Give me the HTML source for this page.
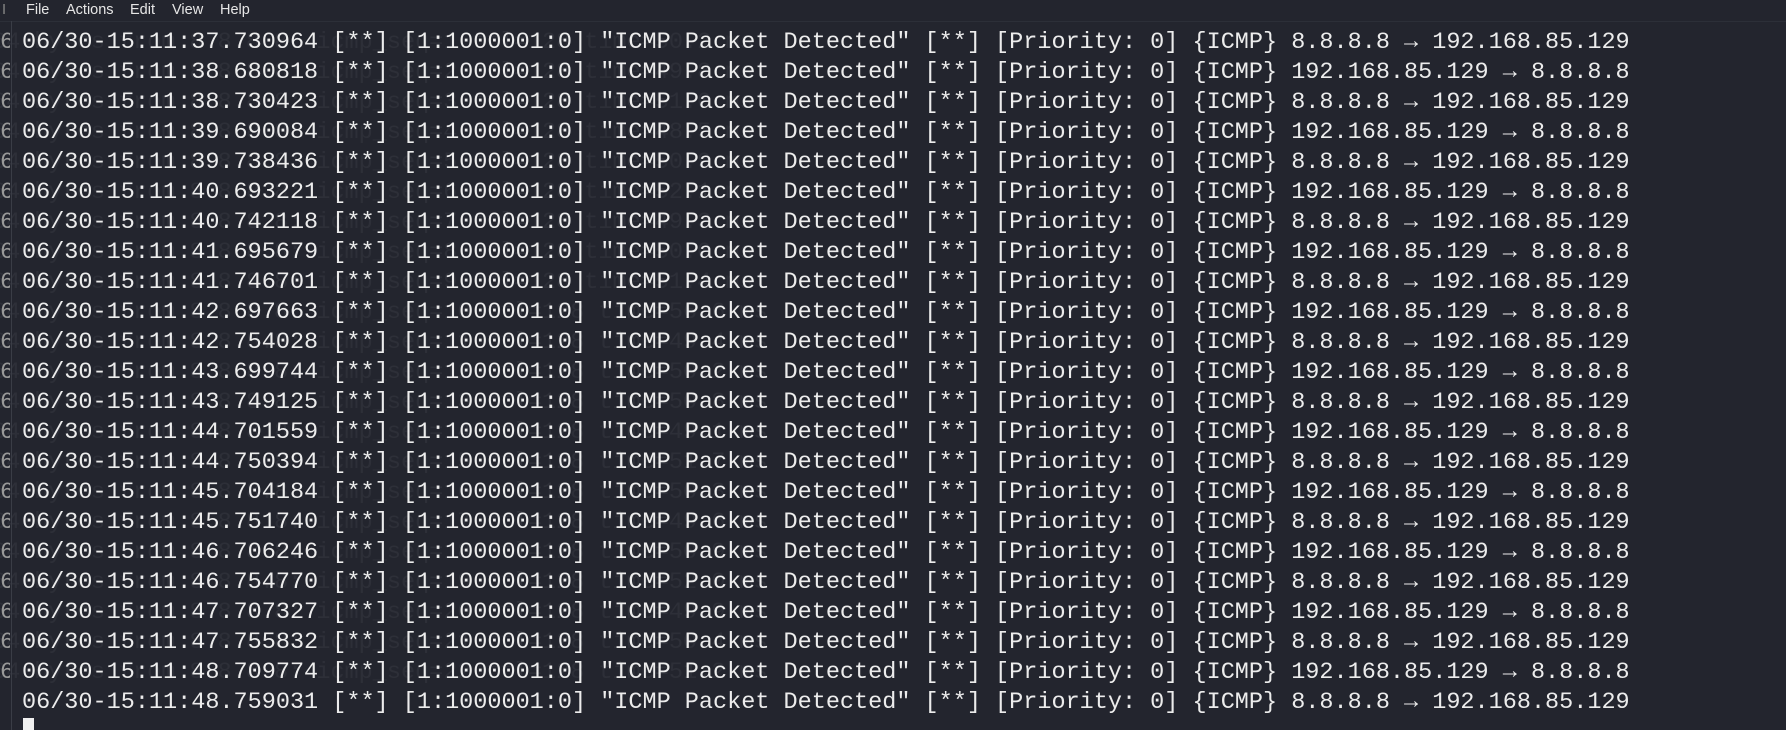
<!DOCTYPE html>
<html><head><style>
html,body{margin:0;padding:0;width:1786px;height:730px;overflow:hidden;background:#23252e;}
.menu{position:absolute;left:0;top:0;width:1786px;height:21px;background:#23252e;border-bottom:1px solid #2c2f38;font-family:"Liberation Sans",sans-serif;font-size:14.5px;color:#e6e6e6;}
.menu span{position:absolute;top:2px;}
.vline{position:absolute;left:11px;top:21px;width:1px;height:709px;background:#3a3d46;}
.ghost{position:absolute;left:-8px;top:28px;font-family:"Liberation Mono",monospace;font-size:23.5px;line-height:30px;color:#e8e8e8;opacity:0.05;white-space:pre;}
.log{position:absolute;left:22px;top:28px;font-family:"Liberation Mono",monospace;font-size:23.5px;line-height:30px;color:#ececec;white-space:pre;}
.left{position:absolute;left:0;top:28px;font-family:"Liberation Mono",monospace;font-size:23.5px;line-height:30px;color:#999;white-space:pre;width:10px;overflow:hidden;}
.cur{position:absolute;left:23px;top:718px;width:11px;height:12px;background:#f0f0f0;}
</style></head><body>
<div class="menu"><span style="left:2px;color:#888">I</span><span style="left:26px">File</span><span style="left:66px">Actions</span><span style="left:130px">Edit</span><span style="left:172px">View</span><span style="left:220px">Help</span></div>
<div class="ghost">64 bytes from 8.8.8.8: icmp_seq=1 ttl=128 time=50.2 ms
64 bytes from 8.8.8.8: icmp_seq=2 ttl=128 time=49.8 ms
64 bytes from 8.8.8.8: icmp_seq=3 ttl=128 time=51.0 ms
64 bytes from 8.8.8.8: icmp_seq=4 ttl=128 time=48.5 ms
64 bytes from 8.8.8.8: icmp_seq=5 ttl=128 time=50.9 ms
64 bytes from 8.8.8.8: icmp_seq=6 ttl=128 time=52.1 ms
64 bytes from 8.8.8.8: icmp_seq=7 ttl=128 time=49.3 ms
64 bytes from 8.8.8.8: icmp_seq=8 ttl=128 time=50.0 ms
64 bytes from 8.8.8.8: icmp_seq=9 ttl=128 time=51.4 ms
64 bytes from 8.8.8.8: icmp_seq=10 ttl=128 time=56.6 ms
64 bytes from 8.8.8.8: icmp_seq=11 ttl=128 time=49.4 ms
64 bytes from 8.8.8.8: icmp_seq=12 ttl=128 time=50.2 ms
64 bytes from 8.8.8.8: icmp_seq=13 ttl=128 time=50.8 ms
64 bytes from 8.8.8.8: icmp_seq=14 ttl=128 time=49.1 ms
64 bytes from 8.8.8.8: icmp_seq=15 ttl=128 time=51.7 ms
64 bytes from 8.8.8.8: icmp_seq=16 ttl=128 time=50.3 ms
64 bytes from 8.8.8.8: icmp_seq=17 ttl=128 time=49.6 ms
64 bytes from 8.8.8.8: icmp_seq=18 ttl=128 time=50.9 ms
64 bytes from 8.8.8.8: icmp_seq=19 ttl=128 time=52.0 ms
64 bytes from 8.8.8.8: icmp_seq=20 ttl=128 time=49.9 ms
64 bytes from 8.8.8.8: icmp_seq=21 ttl=128 time=50.4 ms
64 bytes from 8.8.8.8: icmp_seq=22 ttl=128 time=51.2 ms</div>
<div class="left">6
6
6
6
6
6
6
6
6
6
6
6
6
6
6
6
6
6
6
6
6
6</div>
<div class="vline"></div>
<div class="log">06/30-15:11:37.730964 [**] [1:1000001:0] "ICMP Packet Detected" [**] [Priority: 0] {ICMP} 8.8.8.8 → 192.168.85.129
06/30-15:11:38.680818 [**] [1:1000001:0] "ICMP Packet Detected" [**] [Priority: 0] {ICMP} 192.168.85.129 → 8.8.8.8
06/30-15:11:38.730423 [**] [1:1000001:0] "ICMP Packet Detected" [**] [Priority: 0] {ICMP} 8.8.8.8 → 192.168.85.129
06/30-15:11:39.690084 [**] [1:1000001:0] "ICMP Packet Detected" [**] [Priority: 0] {ICMP} 192.168.85.129 → 8.8.8.8
06/30-15:11:39.738436 [**] [1:1000001:0] "ICMP Packet Detected" [**] [Priority: 0] {ICMP} 8.8.8.8 → 192.168.85.129
06/30-15:11:40.693221 [**] [1:1000001:0] "ICMP Packet Detected" [**] [Priority: 0] {ICMP} 192.168.85.129 → 8.8.8.8
06/30-15:11:40.742118 [**] [1:1000001:0] "ICMP Packet Detected" [**] [Priority: 0] {ICMP} 8.8.8.8 → 192.168.85.129
06/30-15:11:41.695679 [**] [1:1000001:0] "ICMP Packet Detected" [**] [Priority: 0] {ICMP} 192.168.85.129 → 8.8.8.8
06/30-15:11:41.746701 [**] [1:1000001:0] "ICMP Packet Detected" [**] [Priority: 0] {ICMP} 8.8.8.8 → 192.168.85.129
06/30-15:11:42.697663 [**] [1:1000001:0] "ICMP Packet Detected" [**] [Priority: 0] {ICMP} 192.168.85.129 → 8.8.8.8
06/30-15:11:42.754028 [**] [1:1000001:0] "ICMP Packet Detected" [**] [Priority: 0] {ICMP} 8.8.8.8 → 192.168.85.129
06/30-15:11:43.699744 [**] [1:1000001:0] "ICMP Packet Detected" [**] [Priority: 0] {ICMP} 192.168.85.129 → 8.8.8.8
06/30-15:11:43.749125 [**] [1:1000001:0] "ICMP Packet Detected" [**] [Priority: 0] {ICMP} 8.8.8.8 → 192.168.85.129
06/30-15:11:44.701559 [**] [1:1000001:0] "ICMP Packet Detected" [**] [Priority: 0] {ICMP} 192.168.85.129 → 8.8.8.8
06/30-15:11:44.750394 [**] [1:1000001:0] "ICMP Packet Detected" [**] [Priority: 0] {ICMP} 8.8.8.8 → 192.168.85.129
06/30-15:11:45.704184 [**] [1:1000001:0] "ICMP Packet Detected" [**] [Priority: 0] {ICMP} 192.168.85.129 → 8.8.8.8
06/30-15:11:45.751740 [**] [1:1000001:0] "ICMP Packet Detected" [**] [Priority: 0] {ICMP} 8.8.8.8 → 192.168.85.129
06/30-15:11:46.706246 [**] [1:1000001:0] "ICMP Packet Detected" [**] [Priority: 0] {ICMP} 192.168.85.129 → 8.8.8.8
06/30-15:11:46.754770 [**] [1:1000001:0] "ICMP Packet Detected" [**] [Priority: 0] {ICMP} 8.8.8.8 → 192.168.85.129
06/30-15:11:47.707327 [**] [1:1000001:0] "ICMP Packet Detected" [**] [Priority: 0] {ICMP} 192.168.85.129 → 8.8.8.8
06/30-15:11:47.755832 [**] [1:1000001:0] "ICMP Packet Detected" [**] [Priority: 0] {ICMP} 8.8.8.8 → 192.168.85.129
06/30-15:11:48.709774 [**] [1:1000001:0] "ICMP Packet Detected" [**] [Priority: 0] {ICMP} 192.168.85.129 → 8.8.8.8
06/30-15:11:48.759031 [**] [1:1000001:0] "ICMP Packet Detected" [**] [Priority: 0] {ICMP} 8.8.8.8 → 192.168.85.129</div>
<div class="cur"></div>
</body></html>
